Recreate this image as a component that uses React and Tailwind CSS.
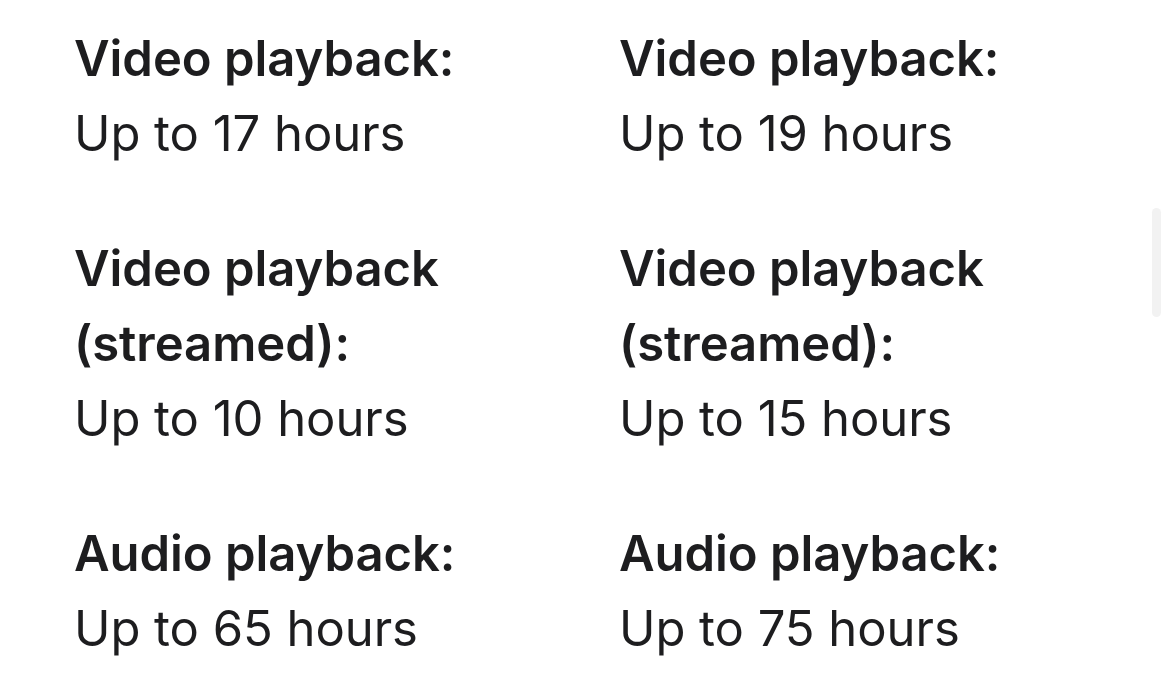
import React from 'react';

const specs = [
  [
    { label: 'Video playback:', value: 'Up to 17 hours' },
    { label: 'Video playback (streamed):', value: 'Up to 10 hours' },
    { label: 'Audio playback:', value: 'Up to 65 hours' },
  ],
  [
    { label: 'Video playback:', value: 'Up to 19 hours' },
    { label: 'Video playback (streamed):', value: 'Up to 15 hours' },
    { label: 'Audio playback:', value: 'Up to 75 hours' },
  ],
];

const App = () => {
  return (
    <div
      className="relative w-[1170px] h-[692px] overflow-hidden bg-white text-[#1d1d1f]"
      style={{ fontFamily: 'Inter, "Noto Sans", sans-serif' }}
    >
      <div className="flex pl-[74px] pt-[21px]">
        {specs.map((col, i) => (
          <div key={i} className="w-[545px] flex flex-col gap-[60px]">
            {col.map((item, j) => (
              <div key={j} className="text-[49px] leading-[75px] tracking-[-0.05px]">
                <p className="font-semibold w-[400px]">{item.label}</p>
                <p className="font-normal">{item.value}</p>
              </div>
            ))}
          </div>
        ))}
      </div>
      {/* scroll indicator */}
      <div className="absolute left-[1152px] top-[208px] w-[9px] h-[109px] rounded-full bg-[#f2f2f2]" />
    </div>
  );
};

export default App;
